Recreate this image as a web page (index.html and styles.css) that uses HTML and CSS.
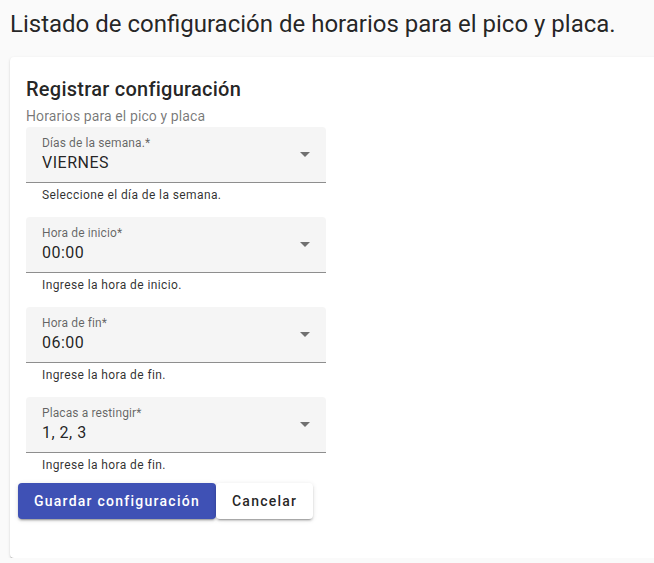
FILE: index.html
```html
<!DOCTYPE html>
<html lang="es">
<head>
<meta charset="utf-8">
<title>Pico y placa</title>
<link rel="stylesheet" href="styles.css">
</head>
<body>
<div class="page">
  <h1 class="page-title">Listado de configuración de horarios para el pico y placa.</h1>
  <section class="card">
    <h2 class="card-title">Registrar configuración</h2>
    <div class="card-subtitle">Horarios para el pico y placa</div>
    <form class="form">
      <div class="field">
        <div class="field-box">
          <div class="field-text">
            <span class="field-label">Días de la semana.*</span>
            <span class="field-value">VIERNES</span>
          </div>
          <span class="arrow"></span>
        </div>
        <div class="field-hint">Seleccione el día de la semana.</div>
      </div>
      <div class="field">
        <div class="field-box">
          <div class="field-text">
            <span class="field-label">Hora de inicio*</span>
            <span class="field-value">00:00</span>
          </div>
          <span class="arrow"></span>
        </div>
        <div class="field-hint">Ingrese la hora de inicio.</div>
      </div>
      <div class="field">
        <div class="field-box">
          <div class="field-text">
            <span class="field-label">Hora de fin*</span>
            <span class="field-value">06:00</span>
          </div>
          <span class="arrow"></span>
        </div>
        <div class="field-hint">Ingrese la hora de fin.</div>
      </div>
      <div class="field">
        <div class="field-box">
          <div class="field-text">
            <span class="field-label">Placas a restingir*</span>
            <span class="field-value">1, 2, 3</span>
          </div>
          <span class="arrow"></span>
        </div>
        <div class="field-hint">Ingrese la hora de fin.</div>
      </div>
      <div class="actions">
        <button type="button" class="btn btn-primary">Guardar configuración</button>
        <button type="button" class="btn btn-plain">Cancelar</button>
      </div>
    </form>
  </section>
</div>
</body>
</html>
```
FILE: styles.css
```css
html, body {
  margin: 0;
  padding: 0;
  background: #fafafa;
  overflow: hidden;
  font-family: Roboto, "Helvetica Neue", sans-serif;
  color: rgba(0, 0, 0, 0.87);
}

.page {
  padding: 0 0 0 10px;
}

.page-title {
  margin: 0;
  padding-top: 9px;
  height: 57px;
  box-sizing: border-box;
  font-size: 24px;
  font-weight: 400;
  line-height: 30px;
}

.card {
  background: #fff;
  border-radius: 4px;
  box-shadow: 0 2px 1px -1px rgba(0,0,0,.2), 0 1px 1px 0 rgba(0,0,0,.14), 0 1px 3px 0 rgba(0,0,0,.12);
  margin-right: -20px;
  padding: 16px 16px 39px;
}

.card-title {
  margin: 0;
  font-size: 20px;
  font-weight: 500;
  line-height: 32px;
  letter-spacing: 0.25px;
}

.card-subtitle {
  font-size: 14px;
  line-height: 22px;
  letter-spacing: 0.1px;
  color: rgba(0, 0, 0, 0.54);
}

.form {
  display: flex;
  flex-direction: column;
  gap: 4px;
}

.field {
  width: 300px;
}

.field-box {
  background: #f5f5f5;
  border-radius: 4px 4px 0 0;
  border-bottom: 1px solid rgba(0, 0, 0, 0.42);
  height: 56px;
  box-sizing: border-box;
  padding: 8px 16px 0;
  display: flex;
  align-items: center;
}

.field-text {
  flex: 1;
  display: flex;
  flex-direction: column;
  align-self: flex-start;
}

.field-label {
  font-size: 12px;
  line-height: 16px;
  letter-spacing: 0.11px;
  color: rgba(0, 0, 0, 0.6);
}

.field-value {
  font-size: 16px;
  line-height: 24px;
  letter-spacing: 0.5px;
  color: rgba(0, 0, 0, 0.87);
}

.arrow {
  width: 0;
  height: 0;
  border-left: 5px solid transparent;
  border-right: 5px solid transparent;
  border-top: 5px solid rgba(0, 0, 0, 0.54);
  margin-top: -8px;
}

.field-hint {
  height: 30px;
  box-sizing: border-box;
  padding: 4px 16px 0;
  font-size: 12px;
  line-height: 16px;
  letter-spacing: 0.4px;
  color: rgba(0, 0, 0, 0.82);
}

.actions {
  display: flex;
  margin-left: -8px;
  margin-top: -4px;
}

.btn {
  height: 36px;
  padding: 0 16px;
  border: none;
  border-radius: 4px;
  font-family: Roboto, sans-serif;
  font-size: 14px;
  font-weight: 500;
  letter-spacing: 1.25px;
  box-shadow: 0 3px 1px -2px rgba(0,0,0,.2), 0 2px 2px 0 rgba(0,0,0,.14), 0 1px 5px 0 rgba(0,0,0,.12);
  cursor: pointer;
}

.btn-primary {
  background: #3f51b5;
  color: #fff;
}

.btn-plain {
  background: #fff;
  color: rgba(0, 0, 0, 0.87);
}
```
